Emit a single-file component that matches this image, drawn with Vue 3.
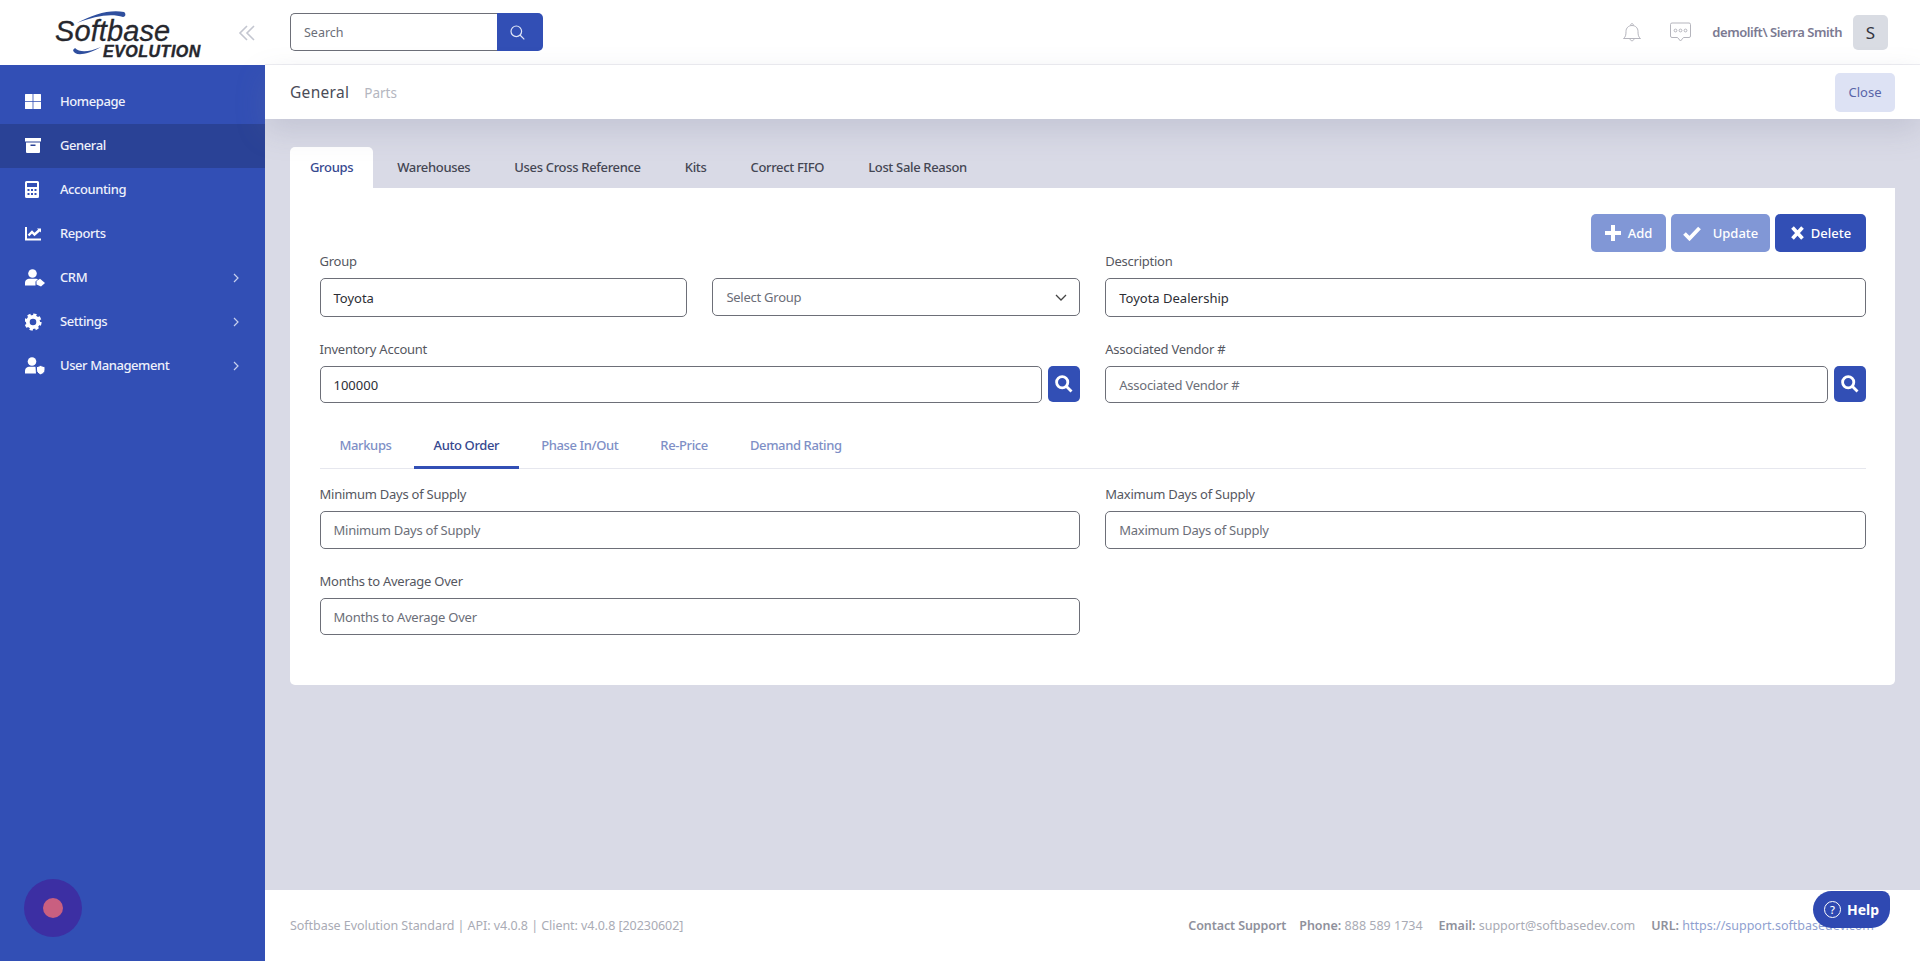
<script setup>
const nav = [
  { label: 'Homepage', icon: 'home' },
  { label: 'General', icon: 'box', active: true },
  { label: 'Accounting', icon: 'calc' },
  { label: 'Reports', icon: 'chart' },
  { label: 'CRM', icon: 'tag', more: true },
  { label: 'Settings', icon: 'cog', more: true },
  { label: 'User Management', icon: 'shield', more: true },
]
const tabs = ['Groups', 'Warehouses', 'Uses Cross Reference', 'Kits', 'Correct FIFO', 'Lost Sale Reason']
const subtabs = ['Markups', 'Auto Order', 'Phase In/Out', 'Re-Price', 'Demand Rating']
</script>

<template>
  <div class="app">
    <aside class="side">
      <div class="brand">
        <svg class="logo" width="170" height="65" viewBox="0 0 170 65">
          <path d="M22 23 C38 14 56 9 69 12 C71 13 71 17 68 17 C56 13 40 16 22 23 Z" fill="#2f4f9e" />
          <path d="M18 50 C19 56 30 56 46 47 C34 52 25 53 20 48 Z" fill="#2f4f9e" />
          <text x="0" y="41" class="logo-main">Softbase</text>
          <text x="48" y="57" class="logo-sub">EVOLUTION</text>
        </svg>
        <svg class="collapse" width="17" height="16" viewBox="0 0 17 16" fill="none" stroke="#c3c6d0" stroke-width="1.600">
          <path d="M9 1 2 8l7 7M16 1 9 8l7 7" />
        </svg>
      </div>
      <nav class="menu">
        <div v-for="n in nav" :key="n.label" class="item" :class="{ active: n.active }">
          <svg class="ico" width="20" height="18" viewBox="0 0 20 18" fill="#fff">
            <template v-if="n.icon === 'home'">
              <path d="M0 .6A.6 .6 0 0 1 .6 0H7.600V7H0ZM8.400 0H15.400A.6 .6 0 0 1 16 .6V7H8.400ZM0 7.800H7.600V15H.6A.6 .6 0 0 1 0 14.400ZM8.400 7.800H16V14.400A.6 .6 0 0 1 15.400 15H8.400Z" transform="translate(0 1)" />
            </template>
            <template v-else-if="n.icon === 'box'">
              <path d="M0 1H16V4.500H0ZM1 5.500H15V15A1 1 0 0 1 14 16H2A1 1 0 0 1 1 15ZM5.500 7.500V9H10.500V7.500Z" fill-rule="evenodd" />
            </template>
            <template v-else-if="n.icon === 'calc'">
              <path d="M1.500 0H12.500A1.500 1.500 0 0 1 14 1.500V15.500A1.500 1.500 0 0 1 12.500 17H1.500A1.500 1.500 0 0 1 0 15.500V1.500A1.500 1.500 0 0 1 1.500 0ZM2 2V6H12V2ZM2.500 8V10H4.500V8ZM6 8V10H8V8ZM9.500 8V10H11.500V8ZM2.500 12V14H4.500V12ZM6 12V14H8V12ZM9.500 12V14H11.500V12Z" fill-rule="evenodd" />
            </template>
            <template v-else-if="n.icon === 'chart'">
              <path d="M0 2H2V13.500H16V15.500H0Z" />
              <path d="M3.500 10.500 7 7 9.500 9.500 14.500 5" fill="none" stroke="#fff" stroke-width="2.400" />
              <path d="M12 3.500H16V7.500Z" />
            </template>
            <template v-else-if="n.icon === 'tag'">
              <circle cx="7.500" cy="4.500" r="4.300" />
              <path d="M0 16.500V14C0 11 2.500 9.800 4.500 9.800H11C12 9.800 12.500 10 13 10.300L10.500 12.500V16.500Z" />
              <path d="M11.500 12 15 9.800 20 14 16 17.500 11.500 15.500Z" />
            </template>
            <template v-else-if="n.icon === 'cog'">
              <circle cx="8" cy="9" r="5.200" fill="none" stroke="#fff" stroke-width="3.800" />
              <circle cx="8" cy="9" r="7.200" fill="none" stroke="#fff" stroke-width="2.800" stroke-dasharray="3.200 2.450" />
            </template>
            <template v-else>
              <circle cx="7" cy="4.500" r="4.300" />
              <path d="M0 16.500V14C0 11 2.500 9.800 4.500 9.800H10.500L11 16.500Z" />
              <path d="M11.500 9.800 15.500 8.500 20 9.800V13C20 15.500 18 17 15.500 17.800 13.500 17 11.500 15.500 11.500 13Z" stroke="#324fb5" stroke-width="1" />
            </template>
          </svg>
          <span class="item-label">{{ n.label }}</span>
          <svg v-if="n.more" class="chev" width="6" height="10" viewBox="0 0 6 10" fill="none" stroke="#c7d0ee" stroke-width="1.200">
            <path d="M1 1l4 4-4 4" />
          </svg>
        </div>
      </nav>
      <div class="record"><span class="record-dot"></span></div>
    </aside>

    <div class="main">
      <header class="top">
        <div class="search">
          <div class="search-input">Search</div>
          <div class="search-btn">
            <svg width="15" height="15" viewBox="0 0 15 15" fill="none" stroke="#dfe5f7" stroke-width="1.200">
              <circle cx="6.300" cy="6.300" r="5.300" /><path d="M10 10l4.300 4.300" />
            </svg>
          </div>
        </div>
        <div class="user">
          <svg class="bell" width="20" height="21" viewBox="0 0 20 21" fill="none" stroke="#b5b5bd" stroke-width="1">
            <path d="M1.500 16.500C3.500 15 4 13 4 9.500 4 6 6.500 3.500 10 3.500S16 6 16 9.500C16 13 16.500 15 18.500 16.500Z" />
            <path d="M8.500 3.500C8.500 1 11.500 1 11.500 3.500M8 16.500C8 19.500 12 19.500 12 16.500" />
          </svg>
          <svg class="chat" width="21" height="20" viewBox="0 0 21 20" fill="none" stroke="#b5b5bd" stroke-width="1">
            <path d="M2 1H19A1.500 1.500 0 0 1 20.500 2.500V14A1.500 1.500 0 0 1 19 15.500H13.500L10.500 19 7.500 15.500H2A1.500 1.500 0 0 1 .5 14V2.500A1.500 1.500 0 0 1 2 1Z" />
            <circle cx="5.500" cy="8.500" r="1.400" /><circle cx="10.500" cy="8.500" r="1.400" /><circle cx="15.500" cy="8.500" r="1.400" />
          </svg>
          <span class="user-name">demolift\ Sierra Smith</span>
          <div class="avatar">S</div>
        </div>
      </header>

      <div class="sub">
        <div class="crumbs"><span class="crumb-a">General</span><span class="crumb-b">Parts</span></div>
        <div class="close">Close</div>
      </div>

      <main class="content">
        <div class="tabs">
          <div v-for="(t, i) in tabs" :key="t" class="tab" :class="{ on: i === 0 }">{{ t }}</div>
        </div>
        <section class="card">
          <div class="actions">
            <div class="btn soft">
              <svg width="16" height="16" viewBox="0 0 16 16" fill="#fff"><path d="M6 0H10V6H16V10H10V16H6V10H0V6H6Z" /></svg>
              <span>Add</span>
            </div>
            <div class="btn soft wide">
              <svg width="18" height="15" viewBox="0 0 18 15" fill="none" stroke="#fff" stroke-width="3.800"><path d="M1.500 7.500 6.500 12.500 16.500 2" /></svg>
              <span>Update</span>
            </div>
            <div class="btn solid wide">
              <svg width="13" height="14" viewBox="0 0 13 14" fill="none" stroke="#fff" stroke-width="3.600"><path d="M1.500 1.500 11.500 12.500M11.500 1.500 1.500 12.500" /></svg>
              <span>Delete</span>
            </div>
          </div>

          <div class="grid">
            <div class="split">
              <div class="field">
                <label>Group</label>
                <div class="input tall val">Toyota</div>
              </div>
              <div class="field">
                <label class="blank">&nbsp;</label>
                <div class="input select">
                  <span>Select Group</span>
                  <svg width="12" height="7" viewBox="0 0 12 7" fill="none" stroke="#444" stroke-width="1.300"><path d="M1 1l5 5 5-5" /></svg>
                </div>
              </div>
            </div>
            <div class="field">
              <label>Description</label>
              <div class="input tall val">Toyota Dealership</div>
            </div>
          </div>

          <div class="grid row-b">
            <div class="field">
              <label>Inventory Account</label>
              <div class="with-btn">
                <div class="input val">100000</div>
                <div class="find">
                  <svg width="18" height="18" viewBox="0 0 18 18" fill="none" stroke="#fff" stroke-width="2.800"><circle cx="7.200" cy="7.200" r="5.600" /><path d="M11.500 11.500 16.500 16.500" /></svg>
                </div>
              </div>
            </div>
            <div class="field">
              <label>Associated Vendor #</label>
              <div class="with-btn">
                <div class="input">Associated Vendor #</div>
                <div class="find">
                  <svg width="18" height="18" viewBox="0 0 18 18" fill="none" stroke="#fff" stroke-width="2.800"><circle cx="7.200" cy="7.200" r="5.600" /><path d="M11.500 11.500 16.500 16.500" /></svg>
                </div>
              </div>
            </div>
          </div>

          <div class="subtabs">
            <div v-for="(t, i) in subtabs" :key="t" class="subtab" :class="{ on: i === 1 }">{{ t }}</div>
          </div>

          <div class="grid row-c">
            <div class="field">
              <label>Minimum Days of Supply</label>
              <div class="input big">Minimum Days of Supply</div>
            </div>
            <div class="field">
              <label>Maximum Days of Supply</label>
              <div class="input big">Maximum Days of Supply</div>
            </div>
          </div>
          <div class="grid row-d">
            <div class="field">
              <label>Months to Average Over</label>
              <div class="input">Months to Average Over</div>
            </div>
          </div>
        </section>
      </main>

      <footer class="foot">
        <div class="foot-l">Softbase Evolution Standard | API: v4.0.8 | Client: v4.0.8 [20230602]</div>
        <div class="foot-r">
          <b class="contact">Contact Support</b>
          <span><b>Phone:</b> 888 589 1734</span>
          <span><b>Email:</b> support@softbasedev.com</span>
          <span><b>URL:</b> <a>https://support.softbasedev.com</a></span>
        </div>
      </footer>
      <div class="help"><span class="q">?</span><span>Help</span></div>
    </div>
  </div>
</template>

<style scoped>
.app { display: flex; height: 961px; overflow: hidden; position: relative; font-family: "Noto Sans", sans-serif; font-size: 13px; color: #3f4254; }
.side { width: 265px; flex: none; background: #324fb5; display: flex; flex-direction: column; position: relative; }
.brand { height: 65px; background: #fff; display: flex; align-items: flex-start; padding-left: 55px; position: relative; }
.logo { display: block; overflow: visible; }
.logo-main { font-family: "Liberation Sans", sans-serif; font-style: italic; font-size: 29px; fill: #26272d; letter-spacing: 0.1px; stroke: #26272d; stroke-width: 0.3px; }
.logo-sub { font-family: "Liberation Sans", sans-serif; font-style: italic; font-weight: 700; font-size: 16px; fill: #26272d; letter-spacing: 0.5px; stroke: #26272d; stroke-width: 0.4px; }
.collapse { position: absolute; left: 238px; top: 25px; }
.menu { padding-top: 15px; display: flex; flex-direction: column; }
.item { height: 44px; box-sizing: border-box; display: flex; align-items: center; padding: 0 26px 0 25px; color: #fff; }
.item.active { background: #2a4296; }
.ico { flex: none; margin-right: 15px; }
.item-label { flex: 1; font-weight: 500; color: #eef1fb; letter-spacing: -0.42px; margin-top: -2px; }
.chev { flex: none; }
.record { position: absolute; left: 24px; top: 879px; width: 58px; height: 58px; border-radius: 50%; background: #3c2fa3; display: flex; align-items: center; justify-content: center; }
.record-dot { width: 20px; height: 20px; border-radius: 50%; background: #c95f80; }

.main { flex: 1; min-width: 0; display: flex; flex-direction: column; background: #d9dae6; position: relative; }
.top { height: 65px; flex: none; background: #fff; border-bottom: 1px solid #eeeef2; box-sizing: border-box; display: flex; align-items: center; justify-content: space-between; padding: 0 32px 0 25px; }
.search { display: flex; width: 253px; height: 38px; }
.search-input { flex: 1; border: 1px solid #6d6f78; border-right: none; border-radius: 5px 0 0 5px; padding-left: 13px; display: flex; align-items: center; font-size: 12.500px; color: #6b6e78; }
.search-btn { width: 46px; box-sizing: border-box; padding-right: 5px; background: #324fb5; border-radius: 0 5px 5px 0; display: flex; align-items: center; justify-content: center; }
.user { display: flex; align-items: center; }
.bell { margin-right: 28px; }
.chat { margin-right: 21px; }
.user-name { font-weight: 600; color: #7b7a92; margin-right: 11px; letter-spacing: -0.45px; }
.avatar { width: 35px; height: 35px; border-radius: 5px; background: #d9dce3; display: flex; align-items: center; justify-content: center; font-size: 17px; color: #33353f; }

.sub { height: 54px; flex: none; background: #fff; display: flex; align-items: center; justify-content: space-between; padding: 0 25px; box-shadow: 0 12px 30px rgba(120, 122, 150, 0.22); position: relative; }
.crumbs { display: flex; align-items: baseline; gap: 15px; }
.crumb-a { font-size: 15.500px; color: #4a4c57; letter-spacing: 0.3px; }
.crumb-b { color: #b4b6c0; font-size: 13.500px; }
.close { width: 60px; height: 39px; background: #dde2f4; border-radius: 5px; display: flex; align-items: center; justify-content: center; color: #5965a8; }

.content { flex: 1; padding: 28px 25px 0; }
.tabs { display: flex; height: 41px; }
.tab { padding: 0 22px 2px; display: flex; align-items: center; font-weight: 500; color: #444653; letter-spacing: -0.33px; box-sizing: border-box; }
.tab.on { background: #fff; color: #36488f; border-radius: 5px 5px 0 0; padding: 0 20px 2px; margin-right: 2px; }
.card { background: #fff; height: 497px; box-sizing: border-box; border-radius: 0 0 5px 5px; padding: 26px 29px 0 29.500px; }
.actions { display: flex; justify-content: flex-end; gap: 5px; height: 38px; }
.btn { height: 38px; border-radius: 5px; display: flex; align-items: center; justify-content: center; gap: 7px; color: #fff; font-weight: 500; width: 75px; box-sizing: border-box; }
.btn.wide { width: 99px; gap: 12px; }
.btn.solid { width: 91px; gap: 7px; padding-left: 1px; background: #324fb5; }
.btn.soft { background: #8197d6; }
.grid { display: grid; grid-template-columns: 1fr 1fr; column-gap: 25px; }
.split { display: grid; grid-template-columns: 1fr 1fr; column-gap: 25px; }
.row-b { margin-top: 23px; }
.row-c { margin-top: 16px; }
.row-d { margin-top: 23px; }
.field { display: flex; flex-direction: column; min-width: 0; }
label { height: 20px; box-sizing: border-box; padding-bottom: 2px; margin-bottom: 6px; display: flex; align-items: center; color: #55575f; font-size: 13px; letter-spacing: -0.25px; }
.input { height: 37px; flex: none; box-sizing: border-box; border: 1px solid #6d6f78; border-radius: 5px; padding: 0 13px; display: flex; align-items: center; color: #6b6e78; font-size: 13px; background: #fff; min-width: 0; letter-spacing: -0.25px; }
.input.tall { height: 39px; }
.input.big { height: 38px; }
.input.val { color: #2c2e35; letter-spacing: 0; }
.select { height: 38px; justify-content: space-between; padding-right: 12px; }
.with-btn { display: flex; gap: 6px; height: 37px; align-items: flex-start; }
.with-btn .input { flex: 1; }
.find { width: 32px; height: 36px; flex: none; background: #324fb5; border-radius: 5px; display: flex; align-items: center; justify-content: center; }
.subtabs { display: flex; gap: 2px; margin-top: 19px; height: 47px; border-bottom: 1px solid #e6e7ee; box-sizing: border-box; }
.subtab { padding: 1px 20px 0; display: flex; align-items: center; font-weight: 500; color: #7e8fc6; height: 47px; box-sizing: border-box; border-bottom: 3px solid transparent; letter-spacing: -0.38px; }
.subtab.on { color: #36488f; border-bottom-color: #324fb5; }

.foot { height: 71px; flex: none; background: #fff; display: flex; align-items: center; justify-content: space-between; padding: 0 46px 0 25px; font-size: 12.500px; color: #a9abb5; }
.foot-l { letter-spacing: -0.05px; }
.foot-r { display: flex; gap: 16px; }
.contact { margin-right: -3px; letter-spacing: -0.1px; }
.foot-r b { font-weight: 600; color: #8f919c; }
.foot-r a { color: #8f9fd0; }
.help { position: absolute; left: 1548px; top: 891px; width: 77px; height: 37px; background: #2f49b2; border-radius: 19px 8px 19px 19px; color: #fff; font-weight: 700; font-size: 14px; display: flex; align-items: center; justify-content: center; gap: 6px; box-sizing: border-box; }
.q { width: 15px; height: 15px; border: 1px solid #fff; border-radius: 50%; display: flex; align-items: center; justify-content: center; font-weight: 500; font-size: 11px; }
</style>
